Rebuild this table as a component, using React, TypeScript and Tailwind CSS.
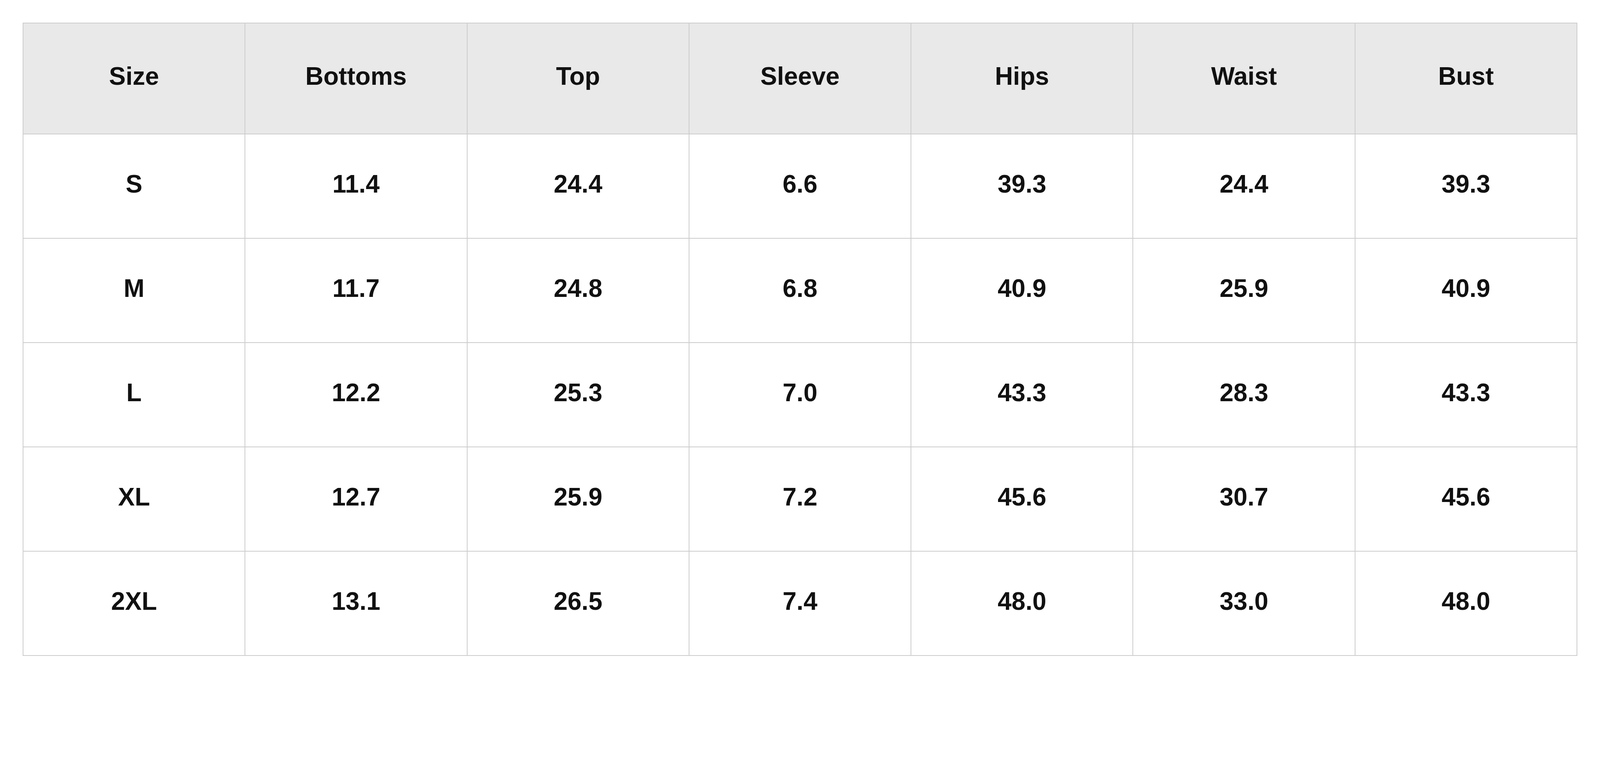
import React from 'react';

const headers = ['Size', 'Bottoms', 'Top', 'Sleeve', 'Hips', 'Waist', 'Bust'];

const rows: string[][] = [
  ['S', '11.4', '24.4', '6.6', '39.3', '24.4', '39.3'],
  ['M', '11.7', '24.8', '6.8', '40.9', '25.9', '40.9'],
  ['L', '12.2', '25.3', '7.0', '43.3', '28.3', '43.3'],
  ['XL', '12.7', '25.9', '7.2', '45.6', '30.7', '45.6'],
  ['2XL', '13.1', '26.5', '7.4', '48.0', '33.0', '48.0'],
];

export default function App() {
  return (
    <div className="bg-white px-[58px] pt-[58px] pb-[54px] font-['Liberation_Sans',Arial,sans-serif] text-[#111111]">
      <table className="w-full table-fixed border-collapse">
        <thead>
          <tr className="h-[284px] bg-[#e9e9e9]">
            {headers.map(h => (
              <th key={h} className="border-2 border-[#cccccc] pb-[12px] text-center align-middle text-[64px] font-bold">
                {h}
              </th>
            ))}
          </tr>
        </thead>
        <tbody>
          {rows.map(row => (
            <tr key={row[0]} className="h-[267px]">
              {row.map((cell, i) => (
                <td key={i} className="border-2 border-[#cccccc] pb-[12px] text-center align-middle text-[64px] font-bold">
                  {cell}
                </td>
              ))}
            </tr>
          ))}
        </tbody>
      </table>
    </div>
  );
}
